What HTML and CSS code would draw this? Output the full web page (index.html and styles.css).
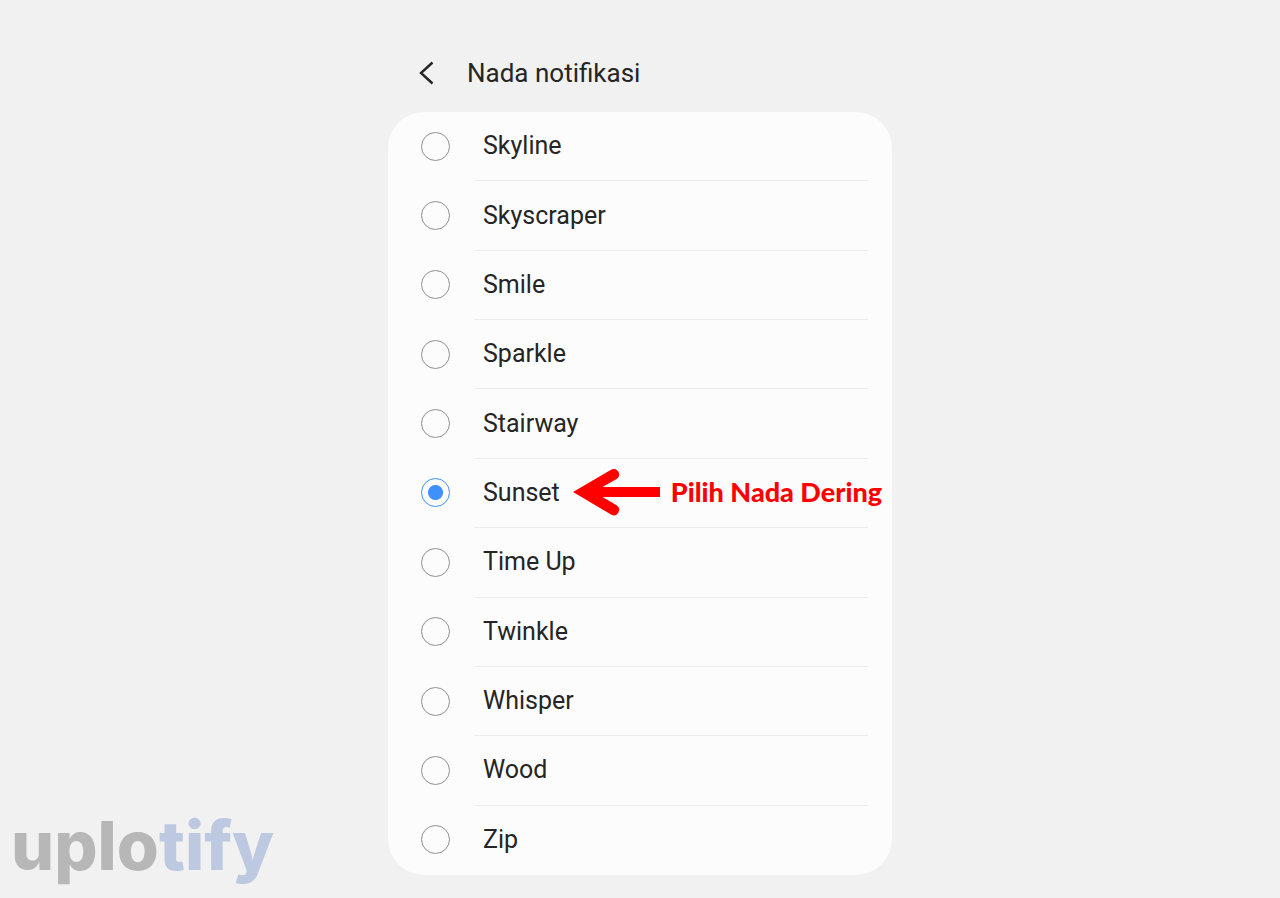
FILE: index.html
```html
<!DOCTYPE html>
<html lang="id">
<head>
<meta charset="utf-8">
<meta name="viewport" content="width=device-width, initial-scale=1">
<title>Nada notifikasi</title>
<link rel="stylesheet" href="styles.css">
</head>
<body class="page">
<main class="screen">
  <header class="header">
    <button class="back" type="button" aria-label="Kembali">
      <svg width="20" height="24" viewBox="0 0 20 24" fill="none" stroke="#252525" stroke-width="2.4"><path d="M16.500 1.500 5 12l11.500 10.500"/></svg>
    </button>
    <h1 class="title">Nada notifikasi</h1>
  </header>
  <form class="card">
    <div class="row"><input class="radio" type="radio" name="tone" id="skyline"><div class="cell"><label for="skyline">Skyline</label></div></div>
    <div class="row"><input class="radio" type="radio" name="tone" id="skyscraper"><div class="cell"><label for="skyscraper">Skyscraper</label></div></div>
    <div class="row"><input class="radio" type="radio" name="tone" id="smile"><div class="cell"><label for="smile">Smile</label></div></div>
    <div class="row"><input class="radio" type="radio" name="tone" id="sparkle"><div class="cell"><label for="sparkle">Sparkle</label></div></div>
    <div class="row"><input class="radio" type="radio" name="tone" id="stairway"><div class="cell"><label for="stairway">Stairway</label></div></div>
    <div class="row"><input class="radio" type="radio" name="tone" id="sunset" checked><div class="cell"><label for="sunset">Sunset</label>
      <div class="hint">
        <svg class="arrow" width="87" height="48" viewBox="0 0 87 48" fill="#f00"><path d="M0 23 38.500 .5A5.400 5.400 0 0 1 44 9.700L29.500 18H87v10H29.500L44 36.600a5.400 5.400 0 0 1-5.500 9.200Z"/></svg>
        <span class="note">Pilih Nada Dering</span>
      </div></div></div>
    <div class="row"><input class="radio" type="radio" name="tone" id="timeup"><div class="cell"><label for="timeup">Time Up</label></div></div>
    <div class="row"><input class="radio" type="radio" name="tone" id="twinkle"><div class="cell"><label for="twinkle">Twinkle</label></div></div>
    <div class="row"><input class="radio" type="radio" name="tone" id="whisper"><div class="cell"><label for="whisper">Whisper</label></div></div>
    <div class="row"><input class="radio" type="radio" name="tone" id="wood"><div class="cell"><label for="wood">Wood</label></div></div>
    <div class="row"><input class="radio" type="radio" name="tone" id="zip"><div class="cell"><label for="zip">Zip</label></div></div>
  </form>
</main>
<div class="brand">uplo<span class="brand-accent">tify</span></div>
</body>
</html>
```
FILE: styles.css
```css
* {
  box-sizing: border-box;
}

.page {
  margin: 0;
  background: #f1f1f1;
  color: #252525;
  font-family: Roboto, sans-serif;
}

.screen {
  display: flex;
  flex-direction: column;
  width: 100%;
  max-width: 504px;
  min-height: 100vh;
  margin: 0 auto;
  padding: 33px 0 23px;
}

.header {
  display: flex;
  align-items: center;
  gap: 31px;
  height: 79px;
  padding-left: 28px;
}

.back {
  display: flex;
  padding: 0;
  border: 0;
  background: none;
}

.title {
  margin: 0;
  font-size: 26px;
  line-height: 32px;
  font-weight: 400;
}

.card {
  display: grid;
  flex: 1;
  grid-template-columns: minmax(0, 1fr);
  grid-auto-rows: minmax(56px, 1fr);
  padding: 0 24px 0 33px;
  border-radius: 36px;
  background: #fcfcfc;
}

.row {
  display: flex;
  align-items: center;
  gap: 24px;
}

.radio {
  appearance: none;
  flex: none;
  width: 29px;
  height: 29px;
  margin: 0 0 1px;
  border: 1px solid #909090;
  border-radius: 50%;
}

.radio:checked {
  border-color: #3e91ff;
  background: radial-gradient(circle, #3e91ff 7px, transparent 8px);
}

.cell {
  display: flex;
  flex: 1;
  align-items: center;
  align-self: stretch;
  gap: 13px;
  min-width: 0;
  padding-left: 9px;
  border-bottom: 1px solid #ececec;
  font-size: 25px;
  line-height: 32px;
  white-space: nowrap;
}

.row:last-child .cell {
  border-bottom: 0;
}

.hint {
  display: flex;
  align-items: center;
  gap: 11px;
}

.arrow {
  flex: none;
}

.note {
  padding-bottom: 2px;
  color: #f00;
  font-family: Lato, sans-serif;
  font-size: 27px;
  font-weight: 900;
}

.brand {
  position: absolute;
  bottom: 11px;
  left: 11px;
  color: #b7b7b7;
  font-family: Inter, sans-serif;
  font-size: 68px;
  font-weight: 800;
  line-height: 84px;
}

.brand-accent {
  color: #bdc9e0;
}
```
